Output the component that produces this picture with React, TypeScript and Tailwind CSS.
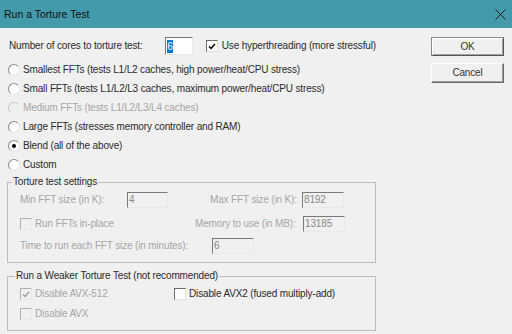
import React from 'react';

const sunken =
  'border border-t-[#7a7a7a] border-l-[#7a7a7a] border-b-[#e8e8e8] border-r-[#e8e8e8]';

function Radio({ checked = false, disabled = false }: { checked?: boolean; disabled?: boolean }) {
  return (
    <div
      className={`w-[12px] h-[12px] rounded-full border-[1.5px] flex items-center justify-center shrink-0 ${
        disabled
          ? 'bg-[#f0f0f0] border-t-[#c8c8c8] border-l-[#c8c8c8] border-b-[#ececec] border-r-[#ececec]'
          : 'bg-white border-t-[#8a8a8a] border-l-[#8a8a8a] border-b-[#e4e4e4] border-r-[#e4e4e4]'
      }`}
    >
      {checked && <div className="w-[4px] h-[4px] rounded-full bg-black" />}
    </div>
  );
}

function Check({ checked = false, disabled = false }: { checked?: boolean; disabled?: boolean }) {
  return (
    <div
      className={`w-[12px] h-[12px] shrink-0 flex items-center justify-center border ${
        disabled
          ? 'bg-[#f0f0f0] border-t-[#b0b0b0] border-l-[#b0b0b0] border-b-[#e8e8e8] border-r-[#e8e8e8]'
          : 'bg-white border-t-[#6a6a6a] border-l-[#6a6a6a] border-b-[#e0e0e0] border-r-[#e0e0e0]'
      }`}
    >
      {checked && (
        <svg width="8" height="7" viewBox="0 0 8 7">
          <path
            d="M1 3.5 L3 5.5 L7 1"
            fill="none"
            stroke={disabled ? '#a0a0a0' : '#000'}
            strokeWidth="1.5"
          />
        </svg>
      )}
    </div>
  );
}

function Field({ value, w }: { value: string; w: string }) {
  return (
    <div className={`${w} h-[16px] ${sunken} bg-[#f0f0f0] flex items-center pl-[1px] text-[#8a8a8a]`}>
      {value}
    </div>
  );
}

const radios: { label: string; checked?: boolean; disabled?: boolean }[] = [
  { label: 'Smallest FFTs (tests L1/L2 caches, high power/heat/CPU stress)' },
  { label: 'Small FFTs (tests L1/L2/L3 caches, maximum power/heat/CPU stress)' },
  { label: 'Medium FFTs (tests L1/L2/L3/L4 caches)', disabled: true },
  { label: 'Large FFTs (stresses memory controller and RAM)' },
  { label: 'Blend (all of the above)', checked: true },
  { label: 'Custom' },
];

export default function App() {
  return (
    <div className="w-[512px] h-[334px] bg-[#f0f0f0] overflow-hidden whitespace-nowrap font-['Liberation_Sans',Arial,sans-serif] text-[10px] tracking-[-0.15px] text-[#2a2a2a] leading-[12px]">
      {/* title bar */}
      <div className="h-[28px] bg-[#439aab] flex items-center justify-between pl-[4px] pr-[6px]">
        <span className="text-[10.5px] tracking-normal text-[#111]">Run a Torture Test</span>
        <svg width="11" height="11" viewBox="0 0 11 11">
          <path d="M0.5 0.5 L10.5 10.5 M10.5 0.5 L0.5 10.5" stroke="#1a1a1a" strokeWidth="1" />
        </svg>
      </div>

      <div className="flex">
        <div className="w-[376px] pl-[7px]">
          {/* cores row */}
          <div className="mt-[9px] h-[18px] flex items-center pl-[2px]">
            <span className="w-[156px]">Number of cores to torture test:</span>
            <div className={`w-[28px] h-[18px] ${sunken} bg-white flex items-center pl-[1px]`}>
              <span className="bg-[#0078d7] text-white px-[0.5px] leading-[13px]">6</span>
            </div>
            <div className="ml-[13px] flex items-center gap-[4px]">
              <Check checked />
              <span>Use hyperthreading (more stressful)</span>
            </div>
          </div>

          {/* FFT choices */}
          <div className="mt-[5px]">
            {radios.map((r) => (
              <div key={r.label} className="h-[19px] flex items-center pl-[1px] gap-[3px]">
                <Radio checked={r.checked} disabled={r.disabled} />
                <span className={r.disabled ? 'text-[#a6a6a6]' : ''}>{r.label}</span>
              </div>
            ))}
          </div>

          {/* torture test settings */}
          <fieldset className="mt-[2px] w-[369px] border border-[#bdbdbd] pl-[12px] pb-[8px]">
            <legend className="ml-[-8px] px-[1px] leading-[12px]">Torture test settings</legend>
            <div className="mt-[4px] h-[16px] flex items-center text-[#a6a6a6]">
              <span className="w-[107px]">Min FFT size (in K):</span>
              <Field value="4" w="w-[41px]" />
              <span className="ml-[42px] w-[92px]">Max FFT size (in K):</span>
              <Field value="8192" w="w-[42px]" />
            </div>
            <div className="mt-[8px] h-[16px] flex items-center text-[#a6a6a6]">
              <div className="w-[175px] flex items-center gap-[3px]">
                <Check disabled />
                <span>Run FFTs in-place</span>
              </div>
              <span className="w-[108px]">Memory to use (in MB):</span>
              <Field value="13185" w="w-[42px]" />
            </div>
            <div className="mt-[6px] h-[16px] flex items-center text-[#a6a6a6]">
              <span className="w-[192px]">Time to run each FFT size (in minutes):</span>
              <Field value="6" w="w-[42px]" />
            </div>
          </fieldset>

          {/* weaker test */}
          <fieldset className="mt-[7px] w-[369px] border border-[#bdbdbd] pl-[12px] pb-[9px]">
            <legend className="ml-[-5px] px-[1px] leading-[12px]">
              Run a Weaker Torture Test (not recommended)
            </legend>
            <div className="mt-[5px] h-[14px] flex items-center">
              <div className="w-[154px] flex items-center gap-[3px] text-[#a6a6a6]">
                <Check checked disabled />
                <span>Disable AVX-512</span>
              </div>
              <div className="flex items-center gap-[3px]">
                <Check />
                <span>Disable AVX2 (fused multiply-add)</span>
              </div>
            </div>
            <div className="mt-[6px] h-[14px] flex items-center gap-[3px] text-[#a6a6a6]">
              <Check disabled />
              <span>Disable AVX</span>
            </div>
          </fieldset>
        </div>

        {/* buttons */}
        <div className="ml-[55px] mt-[9px] flex flex-col gap-[7px]">
          <button className="w-[73px] h-[19px] border border-[#8a8a8a] border-r-[#555] border-b-[#555] bg-[#f0f0f0] shadow-[inset_1px_1px_0_#fff,inset_-1px_-1px_0_#a0a0a0] text-[#333]">
            OK
          </button>
          <button className="w-[73px] h-[20px] border border-t-[#fdfdfd] border-l-[#fdfdfd] border-b-[#6a6a6a] border-r-[#6a6a6a] bg-[#f0f0f0] shadow-[inset_-1px_-1px_0_#a0a0a0] text-[#333]">
            Cancel
          </button>
        </div>
      </div>
    </div>
  );
}
